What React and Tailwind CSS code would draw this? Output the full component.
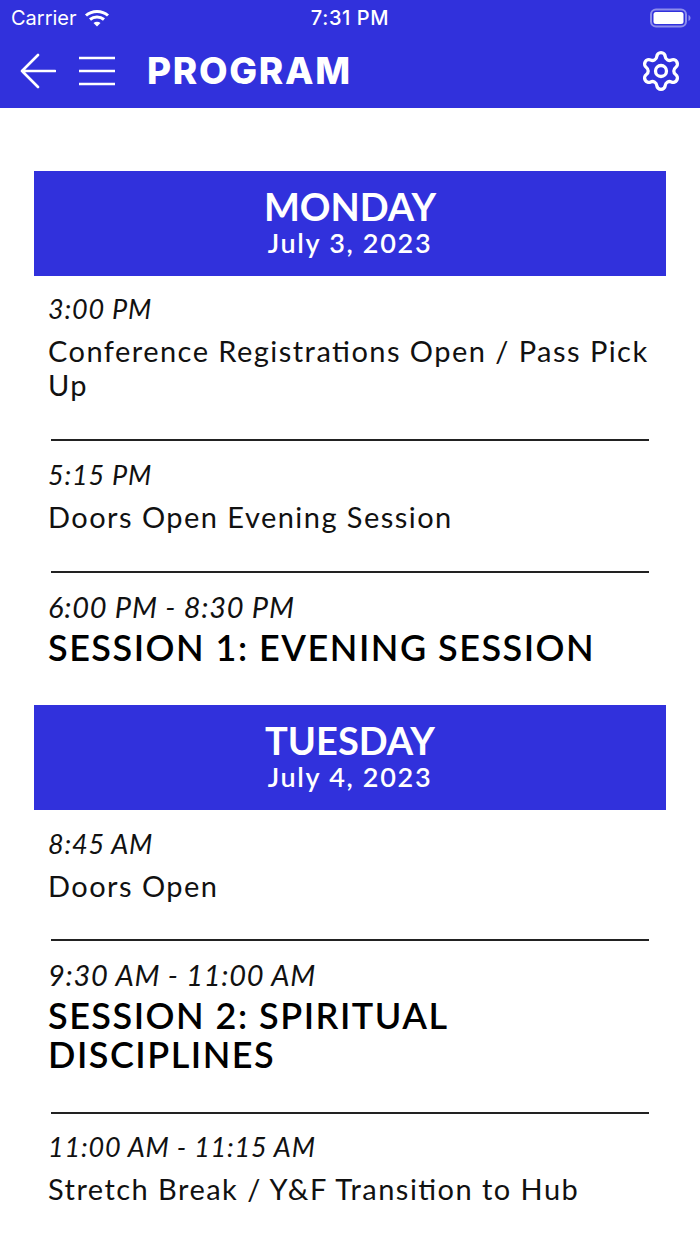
import { Settings } from "lucide-react";

const days = [
  {
    day: "MONDAY",
    date: "July 3, 2023",
    headerHeight: "h-[104.5px]",
    items: [
      { time: "3:00 PM", title: "Conference Registrations Open / Pass Pick Up", h: 165.5 },
      { time: "5:15 PM", title: "Doors Open Evening Session", h: 132 },
      { time: "6:00 PM - 8:30 PM", title: "SESSION 1: EVENING SESSION", big: true, h: 132 },
    ],
  },
  {
    day: "TUESDAY",
    date: "July 4, 2023",
    headerHeight: "h-[105px]",
    items: [
      { time: "8:45 AM", title: "Doors Open", h: 131 },
      { time: "9:30 AM - 11:00 AM", title: "SESSION 2: SPIRITUAL DISCIPLINES", big: true, h: 172.5 },
      { time: "11:00 AM - 11:15 AM", title: "Stretch Break / Y&F Transition to Hub", h: 100 },
    ],
  },
];

function ScheduleItem({ item, last }) {
  return (
    <div style={{ height: item.h }} className="flex flex-col">
      <div className="flex-1 px-[14px] pt-[16.5px]">
        {item.big ? (
          <>
            <p className="text-[29px] leading-[33px] italic tracking-[0.75px] text-[#111]">{item.time}</p>
            <p className="mt-[5px] text-[36px] leading-[39px] font-semibold tracking-[1.5px] text-black [font-feature-settings:'liga'_1]">{item.title}</p>
          </>
        ) : (
          <>
            <p className="text-[27px] leading-[34px] italic tracking-[0.8px] text-[#111]">{item.time}</p>
            <p className="mt-[8px] text-[29px] leading-[34px] tracking-[1.46px] text-[#111] [font-feature-settings:'liga'_1]">{item.title}</p>
          </>
        )}
      </div>
      {!last && <div className="mx-[17px] h-[2px] shrink-0 bg-[#222]" />}
    </div>
  );
}

export default function App() {
  return (
    <div className="h-[1244px] w-[700px] overflow-hidden bg-white font-['Lato',sans-serif]">
      {/* Header */}
      <div className="h-[108px] bg-[#3131dc] text-white">
        <div className="flex h-[36px] items-center justify-between pl-[12px] pr-[8px] font-['Inter',sans-serif] text-[20px]">
          <div className="flex w-[200px] items-center gap-[7px]">
            <span className="-ml-[1px]">Carrier</span>
            <svg width="26" height="20" viewBox="0 0 26 20" fill="none" stroke="white" strokeWidth="3">
              <path d="M2 7.5C8 2 18 2 24 7.5" />
              <path d="M6 11.5C10 8 16 8 20 11.5" />
              <path d="M13 18.5L9.5 15C11.5 13.4 14.5 13.4 16.5 15Z" fill="white" stroke="none" />
            </svg>
          </div>
          <span className="-ml-[4px] font-medium tracking-[0.6px]">7:31 PM</span>
          <div className="flex w-[200px] justify-end">
            <svg width="42" height="20" viewBox="0 0 42 20">
              <rect x="1" y="1.5" width="35" height="17" rx="5" fill="none" stroke="#8d8deb" strokeWidth="2" />
              <rect x="3.5" y="4" width="30" height="12" rx="2.5" fill="white" />
              <path d="M38.5 7v6c1.4-.5 2-1.7 2-3s-.6-2.5-2-3Z" fill="#8d8deb" />
            </svg>
          </div>
        </div>
        <div className="flex h-[70px] items-center pl-[20px] pr-[17px]">
          <svg width="36" height="36" viewBox="0 0 36 36" fill="none" stroke="white" strokeWidth="2.6" strokeLinecap="round" strokeLinejoin="round">
            <path d="M35 18H2M18 2 2 18l16 16" />
          </svg>
          <svg className="ml-[23px]" width="36" height="30" viewBox="0 0 36 30" fill="none" stroke="white" strokeWidth="2.6">
            <path d="M0 2h36M0 15h36M0 28h36" />
          </svg>
          <h1 className="ml-[32px] font-['Inter',sans-serif] text-[37px] font-extrabold tracking-[1.7px]">PROGRAM</h1>
          <Settings className="ml-auto" size={44} strokeWidth={1.8} />
        </div>
      </div>

      {/* Schedule */}
      <div className="px-[34px] pt-[63px]">
        {days.map((d) => (
          <section key={d.day}>
            <div className={`flex ${d.headerHeight} flex-col items-center bg-[#3131dc] pt-[14px] text-white`}>
              <p className="text-[38px] leading-[42px] font-bold">{d.day}</p>
              <p className="mt-[1px] text-[27px] leading-[30px] font-semibold tracking-[1.7px]">{d.date}</p>
            </div>
            {d.items.map((item, i) => (
              <ScheduleItem key={item.time} item={item} last={i === d.items.length - 1} />
            ))}
          </section>
        ))}
      </div>
    </div>
  );
}
